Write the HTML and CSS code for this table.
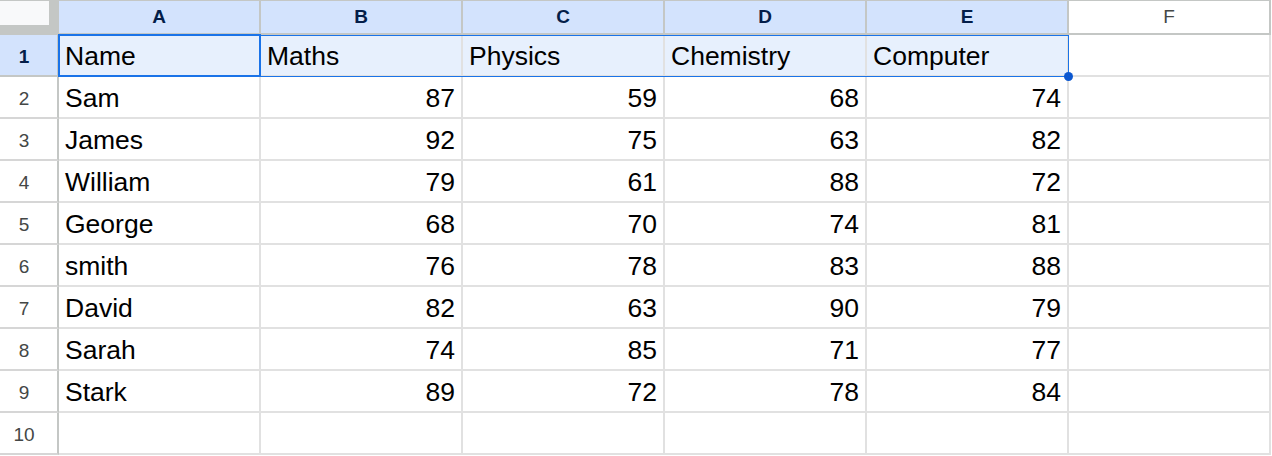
FILE: index.html
```html
<!DOCTYPE html>
<html>
<head>
<meta charset="utf-8">
<link rel="stylesheet" href="styles.css">
</head>
<body>
<div class="sheet">
  <div class="corner"><div class="corner-box"></div></div>
  <div class="col-head sel">A</div>
  <div class="col-head sel">B</div>
  <div class="col-head sel">C</div>
  <div class="col-head sel">D</div>
  <div class="col-head sel">E</div>
  <div class="col-head">F</div>

  <div class="row-head sel">1</div>
  <div class="cell hl">Name</div>
  <div class="cell hl">Maths</div>
  <div class="cell hl">Physics</div>
  <div class="cell hl">Chemistry</div>
  <div class="cell hl">Computer</div>
  <div class="cell"></div>

  <div class="row-head">2</div>
  <div class="cell">Sam</div>
  <div class="cell num">87</div>
  <div class="cell num">59</div>
  <div class="cell num">68</div>
  <div class="cell num">74</div>
  <div class="cell"></div>

  <div class="row-head">3</div>
  <div class="cell">James</div>
  <div class="cell num">92</div>
  <div class="cell num">75</div>
  <div class="cell num">63</div>
  <div class="cell num">82</div>
  <div class="cell"></div>

  <div class="row-head">4</div>
  <div class="cell">William</div>
  <div class="cell num">79</div>
  <div class="cell num">61</div>
  <div class="cell num">88</div>
  <div class="cell num">72</div>
  <div class="cell"></div>

  <div class="row-head">5</div>
  <div class="cell">George</div>
  <div class="cell num">68</div>
  <div class="cell num">70</div>
  <div class="cell num">74</div>
  <div class="cell num">81</div>
  <div class="cell"></div>

  <div class="row-head">6</div>
  <div class="cell">smith</div>
  <div class="cell num">76</div>
  <div class="cell num">78</div>
  <div class="cell num">83</div>
  <div class="cell num">88</div>
  <div class="cell"></div>

  <div class="row-head">7</div>
  <div class="cell">David</div>
  <div class="cell num">82</div>
  <div class="cell num">63</div>
  <div class="cell num">90</div>
  <div class="cell num">79</div>
  <div class="cell"></div>

  <div class="row-head">8</div>
  <div class="cell">Sarah</div>
  <div class="cell num">74</div>
  <div class="cell num">85</div>
  <div class="cell num">71</div>
  <div class="cell num">77</div>
  <div class="cell"></div>

  <div class="row-head">9</div>
  <div class="cell">Stark</div>
  <div class="cell num">89</div>
  <div class="cell num">72</div>
  <div class="cell num">78</div>
  <div class="cell num">84</div>
  <div class="cell"></div>

  <div class="row-head">10</div>
  <div class="cell"></div>
  <div class="cell"></div>
  <div class="cell"></div>
  <div class="cell"></div>
  <div class="cell"></div>
  <div class="cell"></div>

  <div class="range-outline"></div>
  <div class="active-cell"></div>
  <div class="fill-handle"></div>
</div>
</body>
</html>
```

FILE: styles.css
```css
* {
  box-sizing: border-box;
}

html, body {
  margin: 0;
  padding: 0;
  background: #ffffff;
}

body {
  font-family: "Liberation Sans", Arial, sans-serif;
  color: #000000;
}

.sheet {
  position: relative;
  display: grid;
  grid-template-columns: 59px repeat(6, 202px);
  grid-template-rows: 35px repeat(10, 42px);
}

.corner {
  background: #c4c7c5;
}

.corner-box {
  width: 49px;
  height: 24px;
  margin-top: 1px;
  background: #f8f9fa;
}

.col-head {
  border-top: 1px solid #c4c7c5;
  border-right: 2px solid #c4c7c5;
  border-bottom: 2px solid #c4c7c5;
  background: #ffffff;
  color: #444746;
  font-size: 19px;
  line-height: 32px;
  text-align: center;
}

.col-head.sel {
  background: #d3e3fd;
  color: #041e49;
  font-weight: bold;
}

.row-head {
  border-right: 2px solid #c4c7c5;
  border-bottom: 2px solid #d6d6d6;
  background: #ffffff;
  color: #444746;
  font-size: 19px;
  display: flex;
  align-items: center;
  justify-content: center;
  padding: 3px 9px 0 0;
}

.row-head.sel {
  background: #d3e3fd;
  color: #041e49;
  font-weight: bold;
  border-bottom-color: #c4c7c5;
}

.cell {
  border-right: 2px solid #e1e1e1;
  border-bottom: 2px solid #e1e1e1;
  font-size: 26.5px;
  line-height: 30px;
  display: flex;
  align-items: flex-end;
  padding: 0 6px 4px 6px;
  white-space: nowrap;
  overflow: hidden;
}

.cell.num {
  justify-content: flex-end;
}

.cell.hl {
  background: #e7f0fd;
}

.range-outline {
  position: absolute;
  left: 59px;
  top: 35px;
  width: 1010px;
  height: 42px;
  border: 1px solid #1a73e8;
  pointer-events: none;
}

.active-cell {
  position: absolute;
  left: 58px;
  top: 34px;
  width: 203px;
  height: 43px;
  border: 2px solid #1a73e8;
  pointer-events: none;
}

.fill-handle {
  position: absolute;
  left: 1064px;
  top: 72px;
  width: 9px;
  height: 9px;
  border-radius: 50%;
  background: #0b57d0;
}
```
